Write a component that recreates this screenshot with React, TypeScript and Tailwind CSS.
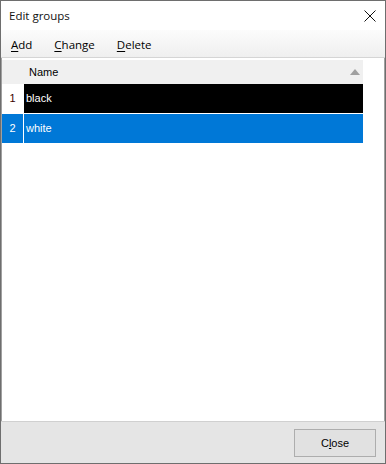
import React from "react";

const seg = { fontFamily: '"Open Sans", "Noto Sans", sans-serif' };
const ms = { fontFamily: '"Liberation Sans", Arial, sans-serif' };

export default function App() {
  return (
    <div className="w-[386px] h-[464px] flex flex-col border border-[#6e6e6e] bg-white overflow-hidden">
      {/* title bar */}
      <div className="h-[29px] flex items-center justify-between bg-white shrink-0">
        <span className="pl-[8px] text-[11.5px] text-[#111] leading-none" style={seg}>Edit groups</span>
        <svg width="12" height="12" viewBox="0 0 12 12" className="mr-[9px]">
          <path d="M0.5 0.5 L11.5 11.5 M11.5 0.5 L0.5 11.5" stroke="#111" strokeWidth="1" />
        </svg>
      </div>
      {/* menu */}
      <div className="h-[28px] flex items-center pt-[2px] bg-gradient-to-b from-[#fcfcfc] to-[#efefef] border-b border-[#d5d5d5] shrink-0 text-[11.5px] text-black" style={seg}>
        <span className="ml-[10px]"><span className="underline underline-offset-2">A</span>dd</span>
        <span className="ml-[22px]"><span className="underline underline-offset-2">C</span>hange</span>
        <span className="ml-[22px]"><span className="underline underline-offset-2">D</span>elete</span>
      </div>
      {/* grid */}
      <div className="flex-1 bg-white border-x border-[#a0a0a0] flex flex-col pr-[21px]" style={ms}>
        <div className="h-[24px] bg-[#f0f0f0] flex items-center relative mt-[2px]">
          <span className="ml-[27px] text-[11px] text-[#000]">Name</span>
          <svg width="10" height="6" viewBox="0 0 10 6" className="absolute right-[3px] top-[9px]">
            <path d="M0 6 L5 0 L10 6 Z" fill="#a0a0a0" />
          </svg>
        </div>
        <div className="h-[30px] flex border-b border-white">
          <div className="w-[22px] bg-white flex items-center justify-center text-[11px] text-[#3a0000] border-r border-white">1</div>
          <div className="flex-1 bg-black text-white text-[11px] flex items-center pl-[2px]">black</div>
        </div>
        <div className="h-[29px] flex">
          <div className="w-[22px] bg-[#0078d7] flex items-center justify-center text-[11px] text-white border-r border-white">2</div>
          <div className="flex-1 bg-[#0078d7] text-white text-[11px] flex items-center pl-[2px]">white</div>
        </div>
      </div>
      {/* footer */}
      <div className="h-[42px] bg-[#e5e5e5] border-t border-[#d0d0d0] shrink-0 flex items-start justify-end pr-[9px] pt-[7px]">
        <button className="w-[82px] h-[28px] bg-[#e1e1e1] border border-[#adadad] text-[11px] text-black" style={ms}>
          C<span className="underline">l</span>ose
        </button>
      </div>
    </div>
  );
}
